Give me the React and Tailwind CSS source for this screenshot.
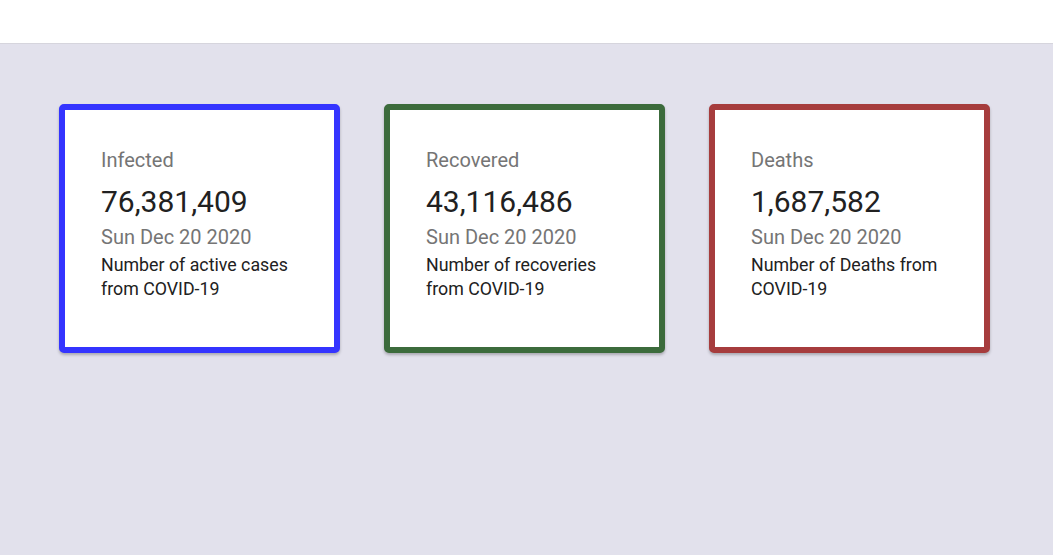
const stats = [
  {
    title: "Infected",
    value: "76,381,409",
    date: "Sun Dec 20 2020",
    text: "Number of active cases from COVID-19",
    border: "border-[#3434ff]",
  },
  {
    title: "Recovered",
    value: "43,116,486",
    date: "Sun Dec 20 2020",
    text: "Number of recoveries from COVID-19",
    border: "border-[#3c6b3c]",
  },
  {
    title: "Deaths",
    value: "1,687,582",
    date: "Sun Dec 20 2020",
    text: "Number of Deaths from COVID-19",
    border: "border-[#a63c3d]",
  },
];

function StatCard({ title, value, date, text, border }) {
  return (
    <div
      className={`w-[280.5px] h-[249px] shrink-0 bg-white border-[6px] ${border} rounded-[5px] shadow-[0_2px_3px_rgba(0,0,0,0.25)] pl-[36px] pr-[42px] pt-[35px]`}
    >
      <p className="text-[20px] leading-[30px] text-[#757575] mb-[7px]">{title}</p>
      <h2 className="text-[30px] leading-[40px] text-[#212121]">{value}</h2>
      <p className="text-[20px] leading-[30px] text-[#757575]">{date}</p>
      <p className="text-[17.8px] leading-[24px] text-[#212121] mt-[1px]">{text}</p>
    </div>
  );
}

export default function App() {
  return (
    <div className="min-h-screen bg-[#e2e1ec]" style={{ fontFamily: "Roboto, 'Liberation Sans', sans-serif" }}>
      <header className="h-[44px] bg-white border-b border-[#d6d5dd]"></header>
      <main className="flex gap-[44.5px] pt-[60px] pl-[59px]">
        {stats.map((s) => (
          <StatCard key={s.title} {...s} />
        ))}
      </main>
    </div>
  );
}
